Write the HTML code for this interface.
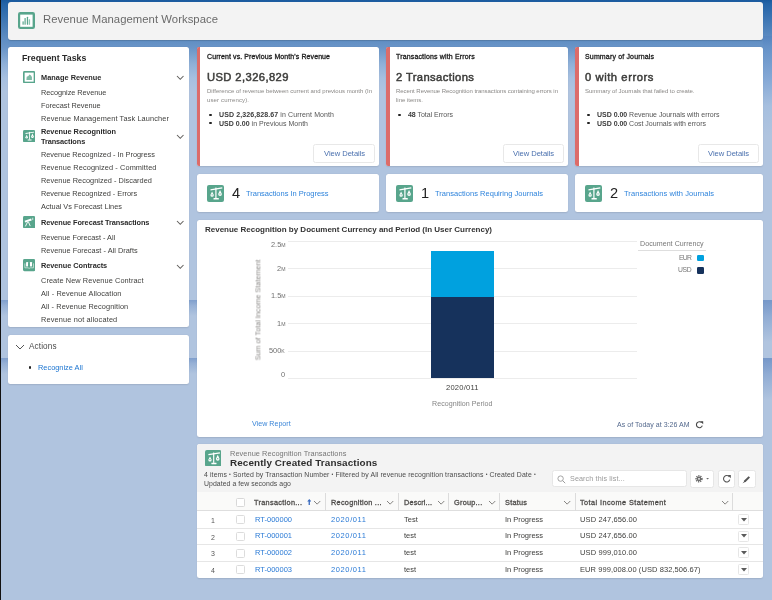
<!DOCTYPE html>
<html><head><meta charset="utf-8"><style>
html,body{margin:0;padding:0}
body{width:772px;height:600px;overflow:hidden;position:relative;background:#b0c4df;font-family:"Liberation Sans",sans-serif}
.t{position:absolute;line-height:1;white-space:nowrap;-webkit-font-smoothing:antialiased;will-change:transform}
.b{position:absolute}
</style></head><body>

<div class="b" style="left:0;top:0;width:772px;height:420px;background:linear-gradient(180deg,#1a5a9e 0px,#2464a8 4px,#5d8cc2 38px,#6a95c8 48px,#8fb0d8 64px,#a6bfdf 78px,#b0c4df 92px)"></div>
<div class="b" style="left:0.00px;top:299.50px;width:772.00px;height:16.00px;background:linear-gradient(180deg,rgba(116,150,200,.8) 0%,rgba(126,158,205,.5) 35%,rgba(176,196,223,0) 100%);"></div>
<div class="b" style="left:763.20px;top:299.50px;width:8.80px;height:42.00px;background:linear-gradient(180deg,rgba(116,150,200,.8) 0%,rgba(124,157,205,.6) 40%,rgba(176,196,223,0) 100%);"></div>
<div class="b" style="left:0.00px;top:358.00px;width:772.00px;height:16.00px;background:linear-gradient(180deg,rgba(116,150,200,.8) 0%,rgba(126,158,205,.5) 35%,rgba(176,196,223,0) 100%);"></div>
<div class="b" style="left:763.20px;top:358.00px;width:8.80px;height:42.00px;background:linear-gradient(180deg,rgba(116,150,200,.8) 0%,rgba(124,157,205,.6) 40%,rgba(176,196,223,0) 100%);"></div>
<div class="b" style="left:763.20px;top:36.00px;width:8.80px;height:104.00px;background:linear-gradient(180deg,#5584bf 0px,#6592c8 11px,#86a9d6 44px,#a6bfdf 70px,#b0c4df 100px);"></div>
<div class="b" style="left:0;top:0;width:1.2px;height:600px;background:#111"></div>
<div class="b" style="left:8.00px;top:2.00px;width:755.00px;height:37.50px;background:#f3f3f3;border-radius:3px;box-shadow:0 0.5px 1px rgba(0,0,0,.15);"></div>
<svg class="b" style="left:18.25px;top:12.1px" width="17" height="17" viewBox="0 0 17 17"><rect x="0" y="0" width="17" height="17" rx="2.2" fill="#58a58c"/><rect x="2.2" y="2.6" width="12.4" height="12.2" fill="#fff"/><rect x="4.5" y="9.3" width="1.2" height="3.4" rx=".5" fill="#58a58c"/><rect x="6.5" y="5.9" width="1.2" height="6.8" rx=".5" fill="#58a58c"/><rect x="8.85" y="4.8" width="1.2" height="7.9" rx=".5" fill="#58a58c"/><rect x="10.7" y="7.2" width="1.4" height="5.5" rx=".5" fill="#8cc4b0"/></svg>
<div class="t" style="left:42.90px;top:14.33px;font-size:11.3px;color:#6a6a6a;font-weight:400;letter-spacing:0.046px;">Revenue Management Workspace</div>
<div class="b" style="left:8.00px;top:47.00px;width:181.30px;height:279.80px;background:#fff;border-radius:2.5px;box-shadow:0 0.6px 1.4px rgba(0,0,0,.10);"></div>
<div class="t" style="left:22.00px;top:53.55px;font-size:8.8px;color:#2a2a2a;font-weight:700;">Frequent Tasks</div>
<svg class="b" style="left:22.8px;top:70.8px" width="12.3" height="12.3" viewBox="0 0 12 12"><rect x="0" y="0" width="12" height="12" rx="1.4" fill="#58a58c"/><rect x="1.6" y="1.6" width="8.8" height="8.8" fill="#fff"/><path d="M3.3 8.8 L3.6 5.6 L5.3 4.8 L6.2 3.4 L7.6 4.2 L8.7 5.8 L8.7 8.8 Z" fill="#7fbba6"/></svg>
<div class="t" style="left:40.75px;top:73.78px;font-size:7.35px;color:#2a2a2a;font-weight:700;letter-spacing:0.035px;">Manage Revenue</div>
<svg class="b" style="left:175.75px;top:74.88px" width="8.5" height="5.25" viewBox="-1 -1 8.5 5.25"><path d="M0 0 L3.25 3.25 L6.5 0" fill="none" stroke="#5f5d5a" stroke-width="1.05"/></svg>
<div class="t" style="left:40.75px;top:88.78px;font-size:7.35px;color:#3e3e3c;font-weight:400;letter-spacing:-0.043px;">Recognize Revenue</div>
<div class="t" style="left:40.75px;top:101.78px;font-size:7.35px;color:#3e3e3c;font-weight:400;letter-spacing:-0.020px;">Forecast Revenue</div>
<div class="t" style="left:40.75px;top:114.78px;font-size:7.35px;color:#3e3e3c;font-weight:400;letter-spacing:0.127px;">Revenue Management Task Launcher</div>
<svg class="b" style="left:22.8px;top:130.2px" width="12.3" height="12.3" viewBox="0 0 17 17"><rect x="0" y="0" width="17" height="17" rx="2" fill="#58a58c"/><g fill="#fff"><path d="M3.4 4.2 L15.2 2.3 L15.4 3.5 L3.6 5.4 Z"/><rect x="8.3" y="2.6" width="1.2" height="10.6"/><rect x="6.5" y="13.0" width="5.3" height="1.5" rx=".3"/><path d="M5.1 6.6 L3.4 9.9 Q3.4 11.8 5.1 11.8 Q6.8 11.8 6.8 9.9 Z"/><path d="M13.05 4.9 L11.2 8.9 Q11.2 11.0 13.05 11.0 Q14.9 11.0 14.9 8.9 Z"/></g><circle cx="5.1" cy="9.8" r=".6" fill="#58a58c"/><circle cx="13.05" cy="8.9" r=".6" fill="#58a58c"/></svg>
<div class="t" style="left:40.75px;top:128.28px;font-size:7.35px;color:#2a2a2a;font-weight:700;letter-spacing:-0.008px;">Revenue Recognition</div>
<div class="t" style="left:40.75px;top:137.78px;font-size:7.35px;color:#2a2a2a;font-weight:700;letter-spacing:-0.099px;">Transactions</div>
<svg class="b" style="left:175.75px;top:133.97px" width="8.5" height="5.25" viewBox="-1 -1 8.5 5.25"><path d="M0 0 L3.25 3.25 L6.5 0" fill="none" stroke="#5f5d5a" stroke-width="1.05"/></svg>
<div class="t" style="left:40.75px;top:151.28px;font-size:7.35px;color:#3e3e3c;font-weight:400;letter-spacing:-0.013px;">Revenue Recognized - In Progress</div>
<div class="t" style="left:40.75px;top:164.28px;font-size:7.35px;color:#3e3e3c;font-weight:400;letter-spacing:0.109px;">Revenue Recognized - Committed</div>
<div class="t" style="left:40.75px;top:177.08px;font-size:7.35px;color:#3e3e3c;font-weight:400;letter-spacing:0.038px;">Revenue Recognized - Discarded</div>
<div class="t" style="left:40.75px;top:190.08px;font-size:7.35px;color:#3e3e3c;font-weight:400;letter-spacing:-0.022px;">Revenue Recognized - Errors</div>
<div class="t" style="left:40.75px;top:202.98px;font-size:7.35px;color:#3e3e3c;font-weight:400;letter-spacing:-0.013px;">Actual Vs Forecast Lines</div>
<svg class="b" style="left:22.8px;top:215.9px" width="12.3" height="12.3" viewBox="0 0 12 12"><rect x="0" y="0" width="12" height="12" rx="1.4" fill="#58a58c"/><path d="M1.6 4.7 L7.9 2.5 L8.5 4.4 L2.1 6.3 Z" fill="#fff"/><path d="M4.4 6.0 L2.5 9.8 M5.4 6.0 L6.9 9.5" stroke="#fff" stroke-width="0.9" stroke-linecap="round"/><path d="M9.5 1.7 L9.5 4.0" stroke="#eaf4f0" stroke-width="0.8"/></svg>
<div class="t" style="left:40.75px;top:218.78px;font-size:7.35px;color:#2a2a2a;font-weight:700;letter-spacing:-0.078px;">Revenue Forecast Transactions</div>
<svg class="b" style="left:175.75px;top:220.38px" width="8.5" height="5.25" viewBox="-1 -1 8.5 5.25"><path d="M0 0 L3.25 3.25 L6.5 0" fill="none" stroke="#5f5d5a" stroke-width="1.05"/></svg>
<div class="t" style="left:40.75px;top:233.78px;font-size:7.35px;color:#3e3e3c;font-weight:400;letter-spacing:-0.005px;">Revenue Forecast - All</div>
<div class="t" style="left:40.75px;top:246.78px;font-size:7.35px;color:#3e3e3c;font-weight:400;letter-spacing:0.027px;">Revenue Forecast - All Drafts</div>
<svg class="b" style="left:22.8px;top:259.4px" width="12.3" height="12.3" viewBox="0 0 12 12"><rect x="0" y="0" width="12" height="12" rx="1.4" fill="#58a58c"/><rect x="3.0" y="3.0" width="1.9" height="4.2" rx=".4" fill="#fff"/><rect x="6.8" y="3.0" width="2.0" height="4.2" rx=".4" fill="#fff"/><path d="M1.8 4.3 L1.8 8.6 L5.0 8.6 Q6 9.7 7.0 8.6 L10.2 8.6 L10.2 4.3" fill="none" stroke="#cfe6dd" stroke-width="0.8"/></svg>
<div class="t" style="left:40.75px;top:262.03px;font-size:7.35px;color:#2a2a2a;font-weight:700;letter-spacing:-0.046px;">Revenue Contracts</div>
<svg class="b" style="left:175.75px;top:263.68px" width="8.5" height="5.25" viewBox="-1 -1 8.5 5.25"><path d="M0 0 L3.25 3.25 L6.5 0" fill="none" stroke="#5f5d5a" stroke-width="1.05"/></svg>
<div class="t" style="left:40.75px;top:276.78px;font-size:7.35px;color:#3e3e3c;font-weight:400;letter-spacing:0.093px;">Create New Revenue Contract</div>
<div class="t" style="left:40.75px;top:290.03px;font-size:7.35px;color:#3e3e3c;font-weight:400;letter-spacing:0.125px;">All - Revenue Allocation</div>
<div class="t" style="left:40.75px;top:303.28px;font-size:7.35px;color:#3e3e3c;font-weight:400;letter-spacing:0.095px;">All - Revenue Recognition</div>
<div class="t" style="left:40.75px;top:316.28px;font-size:7.35px;color:#3e3e3c;font-weight:400;letter-spacing:0.156px;">Revenue not allocated</div>
<div class="b" style="left:8.00px;top:334.60px;width:181.30px;height:49.40px;background:#fff;border-radius:2.5px;box-shadow:0 0.6px 1.4px rgba(0,0,0,.10);"></div>
<svg class="b" style="left:14.80px;top:343.70px" width="10" height="6.0" viewBox="-1 -1 10 6.0"><path d="M0 0 L4.0 4.0 L8 0" fill="none" stroke="#555" stroke-width="1.0"/></svg>
<div class="t" style="left:29.00px;top:343.26px;font-size:8.2px;color:#4a4a4a;font-weight:400;letter-spacing:0.118px;">Actions</div>
<div class="b" style="left:29.2px;top:366.3px;width:2.3px;height:2.3px;border-radius:50%;background:#222"></div>
<div class="t" style="left:38.20px;top:363.64px;font-size:7.4px;color:#1b74d0;font-weight:400;">Recognize All</div>
<div class="b" style="left:196.50px;top:46.90px;width:182.20px;height:119.30px;background:#fff;border-radius:2.5px;box-shadow:0 0.6px 1.4px rgba(0,0,0,.10);overflow:hidden;"></div>
<div class="b" style="left:196.50px;top:46.90px;width:3.60px;height:119.30px;background:#dc6c69;border-radius:2px 0 0 2px;"></div>
<div class="t" style="left:207.20px;top:53.47px;font-size:7.0px;color:#222;font-weight:400;-webkit-text-stroke:0.3px #222;letter-spacing:0.097px;">Current vs. Previous Month's Revenue</div>
<div class="t" style="left:207.20px;top:72.12px;font-size:11.2px;color:#3e3e3c;font-weight:400;-webkit-text-stroke:0.5px #3e3e3c;letter-spacing:0.410px;">USD 2,326,829</div>
<div class="t" style="left:207.20px;top:87.62px;font-size:6.0px;color:#8a8886;font-weight:400;letter-spacing:0.000px;">Difference of revenue between current and previous month (In</div>
<div class="t" style="left:207.20px;top:96.72px;font-size:6.0px;color:#8a8886;font-weight:400;letter-spacing:0.142px;">user currency).</div>
<div class="b" style="left:209.40px;top:113.70px;width:2.4px;height:2.4px;border-radius:50%;background:#222"></div>
<div class="t" style="left:218.70px;top:111.37px;font-size:7.0px;color:#555;font-weight:400;letter-spacing:0.104px;"><b style="color:#3a3a3a">USD 2,326,828.67</b> in Current Month</div>
<div class="b" style="left:209.40px;top:122.10px;width:2.4px;height:2.4px;border-radius:50%;background:#222"></div>
<div class="t" style="left:218.70px;top:119.77px;font-size:7.0px;color:#555;font-weight:400;letter-spacing:0.027px;"><b style="color:#3a3a3a">USD 0.00</b> in Previous Month</div>
<div class="b" style="left:313.40px;top:144.20px;width:61.50px;height:18.70px;background:#fff;border:0.8px solid #e8e8e8;border-radius:2.5px;box-sizing:border-box;"></div>
<div class="t" style="left:323.50px;top:149.67px;font-size:7.6px;color:#4a70ae;font-weight:400;letter-spacing:-0.043px;">View Details</div>
<div class="b" style="left:386.00px;top:46.90px;width:181.60px;height:119.30px;background:#fff;border-radius:2.5px;box-shadow:0 0.6px 1.4px rgba(0,0,0,.10);overflow:hidden;"></div>
<div class="b" style="left:386.00px;top:46.90px;width:3.60px;height:119.30px;background:#dc6c69;border-radius:2px 0 0 2px;"></div>
<div class="t" style="left:396.00px;top:53.47px;font-size:7.0px;color:#222;font-weight:400;-webkit-text-stroke:0.3px #222;letter-spacing:0.154px;">Transactions with Errors</div>
<div class="t" style="left:396.00px;top:72.12px;font-size:11.2px;color:#3e3e3c;font-weight:400;-webkit-text-stroke:0.5px #3e3e3c;letter-spacing:0.397px;">2 Transactions</div>
<div class="t" style="left:396.00px;top:87.62px;font-size:6.0px;color:#8a8886;font-weight:400;letter-spacing:-0.047px;">Recent Revenue Recognition transactions containing errors in</div>
<div class="t" style="left:396.00px;top:96.72px;font-size:6.0px;color:#8a8886;font-weight:400;letter-spacing:-0.001px;">line items.</div>
<div class="b" style="left:398.20px;top:113.70px;width:2.4px;height:2.4px;border-radius:50%;background:#222"></div>
<div class="t" style="left:407.50px;top:111.37px;font-size:7.0px;color:#555;font-weight:400;letter-spacing:-0.028px;"><b style="color:#3a3a3a">48</b> Total Errors</div>
<div class="b" style="left:503.10px;top:144.20px;width:61.20px;height:18.70px;background:#fff;border:0.8px solid #e8e8e8;border-radius:2.5px;box-sizing:border-box;"></div>
<div class="t" style="left:513.05px;top:149.67px;font-size:7.6px;color:#4a70ae;font-weight:400;letter-spacing:-0.043px;">View Details</div>
<div class="b" style="left:575.40px;top:46.90px;width:187.80px;height:119.30px;background:#fff;border-radius:2.5px;box-shadow:0 0.6px 1.4px rgba(0,0,0,.10);overflow:hidden;"></div>
<div class="b" style="left:575.40px;top:46.90px;width:3.60px;height:119.30px;background:#dc6c69;border-radius:2px 0 0 2px;"></div>
<div class="t" style="left:585.00px;top:53.47px;font-size:7.0px;color:#222;font-weight:400;-webkit-text-stroke:0.3px #222;letter-spacing:0.159px;">Summary of Journals</div>
<div class="t" style="left:585.00px;top:72.12px;font-size:11.2px;color:#3e3e3c;font-weight:400;-webkit-text-stroke:0.5px #3e3e3c;letter-spacing:0.574px;">0 with errors</div>
<div class="t" style="left:585.00px;top:87.62px;font-size:6.0px;color:#8a8886;font-weight:400;letter-spacing:-0.038px;">Summary of Journals that failed to create.</div>
<div class="b" style="left:587.20px;top:113.70px;width:2.4px;height:2.4px;border-radius:50%;background:#222"></div>
<div class="t" style="left:596.50px;top:111.37px;font-size:7.0px;color:#555;font-weight:400;letter-spacing:-0.023px;"><b style="color:#3a3a3a">USD 0.00</b> Revenue Journals with errors</div>
<div class="b" style="left:587.20px;top:122.10px;width:2.4px;height:2.4px;border-radius:50%;background:#222"></div>
<div class="t" style="left:596.50px;top:119.77px;font-size:7.0px;color:#555;font-weight:400;letter-spacing:-0.021px;"><b style="color:#3a3a3a">USD 0.00</b> Cost Journals with errors</div>
<div class="b" style="left:698.10px;top:144.20px;width:61.40px;height:18.70px;background:#fff;border:0.8px solid #e8e8e8;border-radius:2.5px;box-sizing:border-box;"></div>
<div class="t" style="left:708.15px;top:149.67px;font-size:7.6px;color:#4a70ae;font-weight:400;letter-spacing:-0.043px;">View Details</div>
<div class="b" style="left:196.90px;top:174.30px;width:181.80px;height:38.20px;background:#fff;border-radius:2.5px;box-shadow:0 0.6px 1.4px rgba(0,0,0,.10);"></div>
<svg class="b" style="left:206.80px;top:184.90px" width="17" height="17" viewBox="0 0 17 17"><rect x="0" y="0" width="17" height="17" rx="2" fill="#58a58c"/><g fill="#fff"><path d="M3.4 4.2 L15.2 2.3 L15.4 3.5 L3.6 5.4 Z"/><rect x="8.3" y="2.6" width="1.2" height="10.6"/><rect x="6.5" y="13.0" width="5.3" height="1.5" rx=".3"/><path d="M5.1 6.6 L3.4 9.9 Q3.4 11.8 5.1 11.8 Q6.8 11.8 6.8 9.9 Z"/><path d="M13.05 4.9 L11.2 8.9 Q11.2 11.0 13.05 11.0 Q14.9 11.0 14.9 8.9 Z"/></g><circle cx="5.1" cy="9.8" r=".6" fill="#58a58c"/><circle cx="13.05" cy="8.9" r=".6" fill="#58a58c"/></svg>
<div class="t" style="left:231.70px;top:185.84px;font-size:14.6px;color:#222;font-weight:400;">4</div>
<div class="t" style="left:246.00px;top:190.05px;font-size:7.5px;color:#2f84dc;font-weight:400;letter-spacing:-0.025px;">Transactions In Progress</div>
<div class="b" style="left:386.10px;top:174.30px;width:181.50px;height:38.20px;background:#fff;border-radius:2.5px;box-shadow:0 0.6px 1.4px rgba(0,0,0,.10);"></div>
<svg class="b" style="left:396.20px;top:184.90px" width="17" height="17" viewBox="0 0 17 17"><rect x="0" y="0" width="17" height="17" rx="2" fill="#58a58c"/><g fill="#fff"><path d="M3.4 4.2 L15.2 2.3 L15.4 3.5 L3.6 5.4 Z"/><rect x="8.3" y="2.6" width="1.2" height="10.6"/><rect x="6.5" y="13.0" width="5.3" height="1.5" rx=".3"/><path d="M5.1 6.6 L3.4 9.9 Q3.4 11.8 5.1 11.8 Q6.8 11.8 6.8 9.9 Z"/><path d="M13.05 4.9 L11.2 8.9 Q11.2 11.0 13.05 11.0 Q14.9 11.0 14.9 8.9 Z"/></g><circle cx="5.1" cy="9.8" r=".6" fill="#58a58c"/><circle cx="13.05" cy="8.9" r=".6" fill="#58a58c"/></svg>
<div class="t" style="left:421.00px;top:185.84px;font-size:14.6px;color:#222;font-weight:400;">1</div>
<div class="t" style="left:435.00px;top:190.05px;font-size:7.5px;color:#2f84dc;font-weight:400;letter-spacing:0.024px;">Transactions Requiring Journals</div>
<div class="b" style="left:575.10px;top:174.30px;width:188.10px;height:38.20px;background:#fff;border-radius:2.5px;box-shadow:0 0.6px 1.4px rgba(0,0,0,.10);"></div>
<svg class="b" style="left:585.00px;top:184.90px" width="17" height="17" viewBox="0 0 17 17"><rect x="0" y="0" width="17" height="17" rx="2" fill="#58a58c"/><g fill="#fff"><path d="M3.4 4.2 L15.2 2.3 L15.4 3.5 L3.6 5.4 Z"/><rect x="8.3" y="2.6" width="1.2" height="10.6"/><rect x="6.5" y="13.0" width="5.3" height="1.5" rx=".3"/><path d="M5.1 6.6 L3.4 9.9 Q3.4 11.8 5.1 11.8 Q6.8 11.8 6.8 9.9 Z"/><path d="M13.05 4.9 L11.2 8.9 Q11.2 11.0 13.05 11.0 Q14.9 11.0 14.9 8.9 Z"/></g><circle cx="5.1" cy="9.8" r=".6" fill="#58a58c"/><circle cx="13.05" cy="8.9" r=".6" fill="#58a58c"/></svg>
<div class="t" style="left:610.20px;top:185.84px;font-size:14.6px;color:#222;font-weight:400;">2</div>
<div class="t" style="left:624.00px;top:190.05px;font-size:7.5px;color:#2f84dc;font-weight:400;letter-spacing:0.060px;">Transactions with Journals</div>
<div class="b" style="left:196.60px;top:220.20px;width:566.60px;height:216.80px;background:#fff;border-radius:2.5px;box-shadow:0 0.6px 1.4px rgba(0,0,0,.10);"></div>
<div class="t" style="left:204.80px;top:226.23px;font-size:8.0px;color:#333;font-weight:700;letter-spacing:-0.009px;">Revenue Recognition by Document Currency and Period (In User Currency)</div>
<div class="b" style="left:288.00px;top:240.60px;width:348.50px;height:0.80px;background:#ececec;"></div>
<div class="b" style="left:288.00px;top:268.10px;width:348.50px;height:0.80px;background:#ececec;"></div>
<div class="b" style="left:288.00px;top:295.60px;width:348.50px;height:0.80px;background:#ececec;"></div>
<div class="b" style="left:288.00px;top:323.20px;width:348.50px;height:0.80px;background:#ececec;"></div>
<div class="b" style="left:288.00px;top:350.80px;width:348.50px;height:0.80px;background:#ececec;"></div>
<div class="b" style="left:288.00px;top:378.10px;width:348.50px;height:0.80px;background:#ececec;"></div>
<div class="t" style="left:270.58px;top:240.54px;font-size:7.4px;color:#707070;font-weight:400;">2.5<span style="font-size:5.2px">M</span></div>
<div class="t" style="left:276.75px;top:264.74px;font-size:7.4px;color:#707070;font-weight:400;">2<span style="font-size:5.2px">M</span></div>
<div class="t" style="left:270.58px;top:292.24px;font-size:7.4px;color:#707070;font-weight:400;">1.5<span style="font-size:5.2px">M</span></div>
<div class="t" style="left:276.75px;top:319.84px;font-size:7.4px;color:#707070;font-weight:400;">1<span style="font-size:5.2px">M</span></div>
<div class="t" style="left:269.39px;top:347.44px;font-size:7.4px;color:#707070;font-weight:400;">500<span style="font-size:5.2px">K</span></div>
<div class="t" style="left:281.08px;top:370.74px;font-size:7.4px;color:#707070;font-weight:400;">0</div>
<div class="t" style="left:257.5px;top:310.3px;font-size:7.2px;color:#8a8886;transform:translate(-50%,-50%) rotate(-90deg);letter-spacing:0.02px">Sum of Total Income Statement</div>
<div class="b" style="left:431.00px;top:250.80px;width:62.50px;height:46.00px;background:#00a1df;"></div>
<div class="b" style="left:431.00px;top:296.80px;width:62.50px;height:81.50px;background:#16325c;"></div>
<div class="t" style="left:445.95px;top:383.57px;font-size:7.6px;color:#3e3e3c;font-weight:400;letter-spacing:0.196px;">2020/011</div>
<div class="t" style="left:431.75px;top:401.39px;font-size:7.1px;color:#858585;font-weight:400;letter-spacing:0.030px;">Recognition Period</div>
<div class="t" style="left:639.80px;top:241.19px;font-size:7.1px;color:#777;font-weight:400;letter-spacing:0.036px;">Document Currency</div>
<div class="b" style="left:637.80px;top:250.30px;width:68.70px;height:0.90px;background:#dedede;"></div>
<div class="t" style="left:678.50px;top:255.34px;font-size:6.8px;color:#777;font-weight:400;letter-spacing:-0.679px;">EUR</div>
<div class="t" style="left:677.80px;top:267.34px;font-size:6.8px;color:#777;font-weight:400;letter-spacing:-0.329px;">USD</div>
<div class="b" style="left:697.30px;top:254.60px;width:6.80px;height:6.70px;background:#00a1df;border-radius:1.2px;"></div>
<div class="b" style="left:697.30px;top:267.10px;width:6.80px;height:6.70px;background:#16325c;border-radius:1.2px;"></div>
<div class="t" style="left:251.80px;top:420.59px;font-size:7.1px;color:#3b86d8;font-weight:400;letter-spacing:0.016px;">View Report</div>
<div class="t" style="left:617.30px;top:420.67px;font-size:7.0px;color:#54698d;font-weight:400;letter-spacing:0.031px;">As of Today at 3:26 AM</div>
<svg class="b" style="left:695px;top:419.5px" width="9" height="9" viewBox="0 0 9 9"><path d="M6.6 2.6 A3 3 0 1 0 7.3 5.6" fill="none" stroke="#444" stroke-width="1.1"/><path d="M5.2 1.2 L8.2 1.2 L8.2 4.2 Z" fill="#444"/></svg>
<div class="b" style="left:196.80px;top:444.40px;width:566.20px;height:133.60px;background:#fff;border-radius:2.5px;box-shadow:0 0.6px 1.4px rgba(0,0,0,.10);overflow:hidden;"></div>
<div class="b" style="left:196.80px;top:444.40px;width:566.20px;height:48.00px;background:#f3f3f3;border-radius:2.5px 2.5px 0 0;"></div>
<svg class="b" style="left:204.90px;top:449.90px" width="16.6" height="16.6" viewBox="0 0 17 17"><rect x="0" y="0" width="17" height="17" rx="2" fill="#58a58c"/><g fill="#fff"><path d="M3.4 4.2 L15.2 2.3 L15.4 3.5 L3.6 5.4 Z"/><rect x="8.3" y="2.6" width="1.2" height="10.6"/><rect x="6.5" y="13.0" width="5.3" height="1.5" rx=".3"/><path d="M5.1 6.6 L3.4 9.9 Q3.4 11.8 5.1 11.8 Q6.8 11.8 6.8 9.9 Z"/><path d="M13.05 4.9 L11.2 8.9 Q11.2 11.0 13.05 11.0 Q14.9 11.0 14.9 8.9 Z"/></g><circle cx="5.1" cy="9.8" r=".6" fill="#58a58c"/><circle cx="13.05" cy="8.9" r=".6" fill="#58a58c"/></svg>
<div class="t" style="left:229.80px;top:449.94px;font-size:7.4px;color:#767676;font-weight:400;letter-spacing:0.056px;">Revenue Recognition Transactions</div>
<div class="t" style="left:229.80px;top:458.22px;font-size:9.9px;color:#2e2e2e;font-weight:700;letter-spacing:0.107px;">Recently Created Transactions</div>
<div class="t" style="left:204.30px;top:472.06px;font-size:6.9px;color:#4a4a4a;font-weight:400;letter-spacing:0.111px;">4 items <span style="font-size:5px;vertical-align:0.8px">•</span> Sorted by Transaction Number <span style="font-size:5px;vertical-align:0.8px">•</span> Filtered by All revenue recognition transactions <span style="font-size:5px;vertical-align:0.8px">•</span> Created Date <span style="font-size:5px;vertical-align:0.8px">•</span></div>
<div class="t" style="left:204.30px;top:481.06px;font-size:6.9px;color:#4a4a4a;font-weight:400;letter-spacing:0.061px;">Updated a few seconds ago</div>
<div class="b" style="left:551.70px;top:470.00px;width:134.90px;height:17.30px;background:#fff;border:0.8px solid #e6e6e6;border-radius:2.5px;box-sizing:border-box;"></div>
<svg class="b" style="left:557px;top:474.5px" width="9" height="9" viewBox="0 0 9 9"><circle cx="3.6" cy="3.6" r="2.7" fill="none" stroke="#9a9a9a" stroke-width="0.9"/><path d="M5.6 5.6 L8.2 8.2" stroke="#9a9a9a" stroke-width="1"/></svg>
<div class="t" style="left:569.90px;top:474.91px;font-size:7.2px;color:#9a9a9a;font-weight:400;letter-spacing:0.110px;">Search this list...</div>
<div class="b" style="left:690.30px;top:469.60px;width:24.10px;height:18.10px;background:#fff;border:0.8px solid #e6e6e6;border-radius:2.5px;box-sizing:border-box;"></div>
<div class="b" style="left:717.80px;top:469.60px;width:17.10px;height:18.10px;background:#fff;border:0.8px solid #e6e6e6;border-radius:2.5px;box-sizing:border-box;"></div>
<div class="b" style="left:738.20px;top:469.60px;width:17.50px;height:18.10px;background:#fff;border:0.8px solid #e6e6e6;border-radius:2.5px;box-sizing:border-box;"></div>
<svg class="b" style="left:694px;top:474px" width="18" height="10" viewBox="0 0 18 10"><circle cx="5" cy="4.8" r="2.9" fill="none" stroke="#6a6a6a" stroke-width="1.6" stroke-dasharray="1.2 0.9"/><circle cx="5" cy="4.8" r="2.4" fill="#6a6a6a"/><circle cx="5" cy="4.8" r="0.9" fill="#fff"/><path d="M12.2 4 L15 4 L13.6 5.6 Z" fill="#6a6a6a"/></svg>
<svg class="b" style="left:721.5px;top:474.2px" width="10" height="9" viewBox="0 0 10 9"><path d="M7.4 3.0 A3.2 3.2 0 1 0 7.8 5.6" fill="none" stroke="#555" stroke-width="1.1"/><path d="M5.6 1.0 L8.8 1.0 L8.8 4.2 Z" fill="#555"/></svg>
<svg class="b" style="left:742px;top:474.5px" width="9" height="9" viewBox="0 0 9 9"><path d="M1.6 7.4 L2.2 5.6 L6.6 1.2 L8.0 2.6 L3.6 7.0 Z" fill="#555"/><path d="M0.9 8.1 L1.7 7.3" stroke="#555" stroke-width="0.8"/></svg>
<div class="b" style="left:196.80px;top:492.30px;width:566.20px;height:19.00px;background:#fafaf9;border-bottom:0.7px solid #dedede;box-sizing:border-box;"></div>
<div class="b" style="left:325.15px;top:493.00px;width:0.70px;height:17.80px;background:#dcdcdc;"></div>
<div class="b" style="left:398.15px;top:493.00px;width:0.70px;height:17.80px;background:#dcdcdc;"></div>
<div class="b" style="left:448.15px;top:493.00px;width:0.70px;height:17.80px;background:#dcdcdc;"></div>
<div class="b" style="left:499.45px;top:493.00px;width:0.70px;height:17.80px;background:#dcdcdc;"></div>
<div class="b" style="left:574.95px;top:493.00px;width:0.70px;height:17.80px;background:#dcdcdc;"></div>
<div class="b" style="left:732.45px;top:493.00px;width:0.70px;height:17.80px;background:#dcdcdc;"></div>
<div class="b" style="left:236.30px;top:498.20px;width:8.50px;height:8.50px;background:#fff;border:0.7px solid #d8d8d8;border-radius:1.5px;box-sizing:border-box;"></div>
<div class="t" style="left:254.40px;top:499.22px;font-size:7.3px;color:#5a5856;font-weight:400;-webkit-text-stroke:0.3px #4a4846;letter-spacing:0.311px;">Transaction...</div>
<svg class="b" style="left:313.35px;top:500.12px" width="8.3" height="5.15" viewBox="-1 -1 8.3 5.15"><path d="M0 0 L3.15 3.15 L6.3 0" fill="none" stroke="#706e6b" stroke-width="0.85"/></svg>
<div class="t" style="left:330.50px;top:499.22px;font-size:7.3px;color:#5a5856;font-weight:400;-webkit-text-stroke:0.3px #4a4846;letter-spacing:0.274px;">Recognition ...</div>
<svg class="b" style="left:385.65px;top:500.12px" width="8.3" height="5.15" viewBox="-1 -1 8.3 5.15"><path d="M0 0 L3.15 3.15 L6.3 0" fill="none" stroke="#706e6b" stroke-width="0.85"/></svg>
<div class="t" style="left:403.50px;top:499.22px;font-size:7.3px;color:#5a5856;font-weight:400;-webkit-text-stroke:0.3px #4a4846;letter-spacing:0.154px;">Descri...</div>
<svg class="b" style="left:437.15px;top:500.12px" width="8.3" height="5.15" viewBox="-1 -1 8.3 5.15"><path d="M0 0 L3.15 3.15 L6.3 0" fill="none" stroke="#706e6b" stroke-width="0.85"/></svg>
<div class="t" style="left:454.00px;top:499.22px;font-size:7.3px;color:#5a5856;font-weight:400;-webkit-text-stroke:0.3px #4a4846;letter-spacing:0.261px;">Group...</div>
<svg class="b" style="left:487.85px;top:500.12px" width="8.3" height="5.15" viewBox="-1 -1 8.3 5.15"><path d="M0 0 L3.15 3.15 L6.3 0" fill="none" stroke="#706e6b" stroke-width="0.85"/></svg>
<div class="t" style="left:504.80px;top:499.22px;font-size:7.3px;color:#5a5856;font-weight:400;-webkit-text-stroke:0.3px #4a4846;letter-spacing:0.261px;">Status</div>
<svg class="b" style="left:562.85px;top:500.12px" width="8.3" height="5.15" viewBox="-1 -1 8.3 5.15"><path d="M0 0 L3.15 3.15 L6.3 0" fill="none" stroke="#706e6b" stroke-width="0.85"/></svg>
<div class="t" style="left:580.30px;top:499.22px;font-size:7.3px;color:#5a5856;font-weight:400;-webkit-text-stroke:0.3px #4a4846;letter-spacing:0.429px;">Total Income Statement</div>
<svg class="b" style="left:721.15px;top:500.12px" width="8.3" height="5.15" viewBox="-1 -1 8.3 5.15"><path d="M0 0 L3.15 3.15 L6.3 0" fill="none" stroke="#706e6b" stroke-width="0.85"/></svg>
<svg class="b" style="left:306.6px;top:498.5px" width="4.5" height="6" viewBox="0 0 4.5 6"><path d="M2.25 0 L4.3 2.4 L2.9 2.4 L2.9 6 L1.6 6 L1.6 2.4 L0.2 2.4 Z" fill="#3a6bbf"/></svg>
<div class="t" style="left:211.25px;top:517.07px;font-size:7.0px;color:#555;font-weight:400;">1</div>
<div class="b" style="left:236.30px;top:515.40px;width:8.50px;height:9.10px;background:#fff;border:0.7px solid #dcdcdc;border-radius:1.5px;box-sizing:border-box;"></div>
<div class="t" style="left:254.60px;top:515.85px;font-size:7.5px;color:#2a7ad6;font-weight:400;letter-spacing:0.004px;">RT-000000</div>
<div class="t" style="left:330.50px;top:515.85px;font-size:7.5px;color:#2a7ad6;font-weight:400;letter-spacing:0.611px;">2020/011</div>
<div class="t" style="left:403.50px;top:515.85px;font-size:7.5px;color:#3e3e3c;font-weight:400;">Test</div>
<div class="t" style="left:504.80px;top:515.85px;font-size:7.5px;color:#3e3e3c;font-weight:400;letter-spacing:-0.035px;">In Progress</div>
<div class="t" style="left:580.30px;top:515.85px;font-size:7.5px;color:#3e3e3c;font-weight:400;letter-spacing:0.119px;">USD 247,656.00</div>
<div class="b" style="left:738.30px;top:514.30px;width:10.70px;height:10.70px;background:#fff;border:0.7px solid #e6e6e6;border-radius:1.5px;box-sizing:border-box;"></div>
<svg class="b" style="left:740.6px;top:517.90px" width="6" height="4" viewBox="0 0 6 4"><path d="M0 0 L6 0 L3 3.6 Z" fill="#5a5a5a"/></svg>
<div class="b" style="left:196.80px;top:527.50px;width:566.20px;height:0.70px;background:#e6e6e6;"></div>
<div class="t" style="left:211.25px;top:533.62px;font-size:7.0px;color:#555;font-weight:400;">2</div>
<div class="b" style="left:236.30px;top:531.95px;width:8.50px;height:9.10px;background:#fff;border:0.7px solid #dcdcdc;border-radius:1.5px;box-sizing:border-box;"></div>
<div class="t" style="left:254.60px;top:532.40px;font-size:7.5px;color:#2a7ad6;font-weight:400;letter-spacing:0.004px;">RT-000001</div>
<div class="t" style="left:330.50px;top:532.40px;font-size:7.5px;color:#2a7ad6;font-weight:400;letter-spacing:0.611px;">2020/011</div>
<div class="t" style="left:403.50px;top:532.40px;font-size:7.5px;color:#3e3e3c;font-weight:400;">test</div>
<div class="t" style="left:504.80px;top:532.40px;font-size:7.5px;color:#3e3e3c;font-weight:400;letter-spacing:-0.035px;">In Progress</div>
<div class="t" style="left:580.30px;top:532.40px;font-size:7.5px;color:#3e3e3c;font-weight:400;letter-spacing:0.119px;">USD 247,656.00</div>
<div class="b" style="left:738.30px;top:530.85px;width:10.70px;height:10.70px;background:#fff;border:0.7px solid #e6e6e6;border-radius:1.5px;box-sizing:border-box;"></div>
<svg class="b" style="left:740.6px;top:534.45px" width="6" height="4" viewBox="0 0 6 4"><path d="M0 0 L6 0 L3 3.6 Z" fill="#5a5a5a"/></svg>
<div class="b" style="left:196.80px;top:544.05px;width:566.20px;height:0.70px;background:#e6e6e6;"></div>
<div class="t" style="left:211.25px;top:550.17px;font-size:7.0px;color:#555;font-weight:400;">3</div>
<div class="b" style="left:236.30px;top:548.50px;width:8.50px;height:9.10px;background:#fff;border:0.7px solid #dcdcdc;border-radius:1.5px;box-sizing:border-box;"></div>
<div class="t" style="left:254.60px;top:548.95px;font-size:7.5px;color:#2a7ad6;font-weight:400;letter-spacing:0.004px;">RT-000002</div>
<div class="t" style="left:330.50px;top:548.95px;font-size:7.5px;color:#2a7ad6;font-weight:400;letter-spacing:0.611px;">2020/011</div>
<div class="t" style="left:403.50px;top:548.95px;font-size:7.5px;color:#3e3e3c;font-weight:400;">test</div>
<div class="t" style="left:504.80px;top:548.95px;font-size:7.5px;color:#3e3e3c;font-weight:400;letter-spacing:-0.035px;">In Progress</div>
<div class="t" style="left:580.30px;top:548.95px;font-size:7.5px;color:#3e3e3c;font-weight:400;letter-spacing:0.119px;">USD 999,010.00</div>
<div class="b" style="left:738.30px;top:547.40px;width:10.70px;height:10.70px;background:#fff;border:0.7px solid #e6e6e6;border-radius:1.5px;box-sizing:border-box;"></div>
<svg class="b" style="left:740.6px;top:551.00px" width="6" height="4" viewBox="0 0 6 4"><path d="M0 0 L6 0 L3 3.6 Z" fill="#5a5a5a"/></svg>
<div class="b" style="left:196.80px;top:560.60px;width:566.20px;height:0.70px;background:#e6e6e6;"></div>
<div class="t" style="left:211.25px;top:566.72px;font-size:7.0px;color:#555;font-weight:400;">4</div>
<div class="b" style="left:236.30px;top:565.05px;width:8.50px;height:9.10px;background:#fff;border:0.7px solid #dcdcdc;border-radius:1.5px;box-sizing:border-box;"></div>
<div class="t" style="left:254.60px;top:565.50px;font-size:7.5px;color:#2a7ad6;font-weight:400;letter-spacing:0.004px;">RT-000003</div>
<div class="t" style="left:330.50px;top:565.50px;font-size:7.5px;color:#2a7ad6;font-weight:400;letter-spacing:0.611px;">2020/011</div>
<div class="t" style="left:403.50px;top:565.50px;font-size:7.5px;color:#3e3e3c;font-weight:400;">test</div>
<div class="t" style="left:504.80px;top:565.50px;font-size:7.5px;color:#3e3e3c;font-weight:400;letter-spacing:-0.035px;">In Progress</div>
<div class="t" style="left:580.30px;top:565.50px;font-size:7.5px;color:#3e3e3c;font-weight:400;letter-spacing:0.084px;">EUR 999,008.00 (USD 832,506.67)</div>
<div class="b" style="left:738.30px;top:563.95px;width:10.70px;height:10.70px;background:#fff;border:0.7px solid #e6e6e6;border-radius:1.5px;box-sizing:border-box;"></div>
<svg class="b" style="left:740.6px;top:567.55px" width="6" height="4" viewBox="0 0 6 4"><path d="M0 0 L6 0 L3 3.6 Z" fill="#5a5a5a"/></svg>
</body></html>
